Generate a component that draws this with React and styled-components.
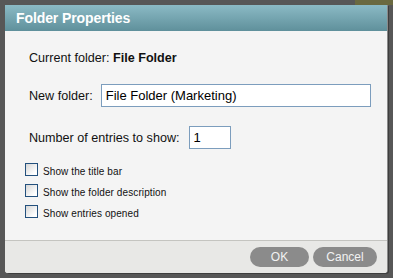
import React from 'react';
import styled, { createGlobalStyle } from 'styled-components';

const GlobalStyle = createGlobalStyle`
  html, body {
    margin: 0;
    padding: 0;
    background: #575757;
  }
  body {
    font-family: "Liberation Sans", Arial, sans-serif;
  }
`;

const Page = styled.div`
  position: relative;
  width: 393px;
  height: 278px;
  padding: 5px 0 0 5px;
  box-sizing: border-box;
  overflow: hidden;
`;

const BackdropScrap = styled.div`
  position: absolute;
  top: 0;
  right: 0;
  width: 38px;
  height: 5px;
  background: #6a6940;
`;

const Dialog = styled.div`
  position: relative;
  width: 382px;
  height: 268px;
  display: flex;
  flex-direction: column;
  background: #f4f4f4;
  border-radius: 0 0 3px 3px;
  box-shadow: 1px 0 0 #8a8a8a, 2px 1px 0 #3e3e3e;
  overflow: hidden;
`;

const TitleBar = styled.div`
  height: 26px;
  display: flex;
  align-items: center;
  padding-left: 11px;
  background: linear-gradient(to bottom, #8bbac5, #5f909b);
`;

const Title = styled.h1`
  margin: 0;
  font-size: 14px;
  font-weight: bold;
  color: #ffffff;
  letter-spacing: -0.1px;
`;

const Body = styled.div`
  flex: 1;
  display: flex;
  flex-direction: column;
  padding: 19px 0 0 20px;
`;

const InfoLine = styled.div`
  font-size: 12.6px;
  line-height: 16px;
  color: #111;
  padding-left: 4px;
  margin-bottom: ${p => p.$gap || 0}px;
`;

const FieldRow = styled.div`
  display: flex;
  align-items: center;
  gap: ${p => p.$space}px;
  padding-left: 4px;
  margin-bottom: ${p => p.$gap || 0}px;
`;

const Label = styled.label`
  font-size: 12.6px;
  color: #111;
`;

const TextInput = styled.input`
  box-sizing: border-box;
  width: ${p => p.$width}px;
  height: 23px;
  margin: 0;
  padding: 0 4px;
  border: 1px solid #7c9dbd;
  background: #ffffff;
  font-family: "Liberation Sans", Arial, sans-serif;
  font-size: 13px;
  color: #000;
  outline: none;
`;

const CheckRow = styled.label`
  display: flex;
  align-items: flex-start;
  gap: 5px;
  height: 21px;
`;

const Box = styled.span`
  box-sizing: border-box;
  width: 13px;
  height: 13px;
  border: 1px solid #23507d;
  background: linear-gradient(135deg, #d6d6d6, #ffffff 80%);
`;

const CheckText = styled.span`
  font-size: 10px;
  letter-spacing: 0.1px;
  line-height: 13px;
  padding-top: 2px;
  color: #111;
`;

const Footer = styled.div`
  height: 33px;
  box-sizing: border-box;
  border-top: 1px solid #c4c4c0;
  background: #e8e8e6;
  display: flex;
  justify-content: flex-end;
  align-items: flex-start;
  gap: 4px;
  padding: 6px 10px 0 0;
`;

const Button = styled.button`
  width: ${p => p.$width}px;
  height: 20px;
  border: none;
  border-radius: 10px;
  background: #8b8b8b;
  color: #f2f2f2;
  font-family: "Liberation Sans", Arial, sans-serif;
  font-size: 12px;
  padding: 0;
  cursor: pointer;
`;

function Checkbox({ label }) {
  return (
    <CheckRow>
      <Box />
      <CheckText>{label}</CheckText>
    </CheckRow>
  );
}

export default function App() {
  return (
    <>
      <GlobalStyle />
      <Page>
        <BackdropScrap />
        <Dialog>
          <TitleBar>
            <Title>Folder Properties</Title>
          </TitleBar>
          <Body>
            <InfoLine $gap={18}>
              Current folder: <b>File Folder</b>
            </InfoLine>
            <FieldRow $space={8} $gap={19}>
              <Label>New folder:</Label>
              <TextInput $width={270} defaultValue="File Folder (Marketing)" />
            </FieldRow>
            <FieldRow $space={9} $gap={14}>
              <Label>Number of entries to show:</Label>
              <TextInput $width={42} defaultValue="1" />
            </FieldRow>
            <Checkbox label="Show the title bar" />
            <Checkbox label="Show the folder description" />
            <Checkbox label="Show entries opened" />
          </Body>
          <Footer>
            <Button $width={59}>OK</Button>
            <Button $width={64}>Cancel</Button>
          </Footer>
        </Dialog>
      </Page>
    </>
  );
}
